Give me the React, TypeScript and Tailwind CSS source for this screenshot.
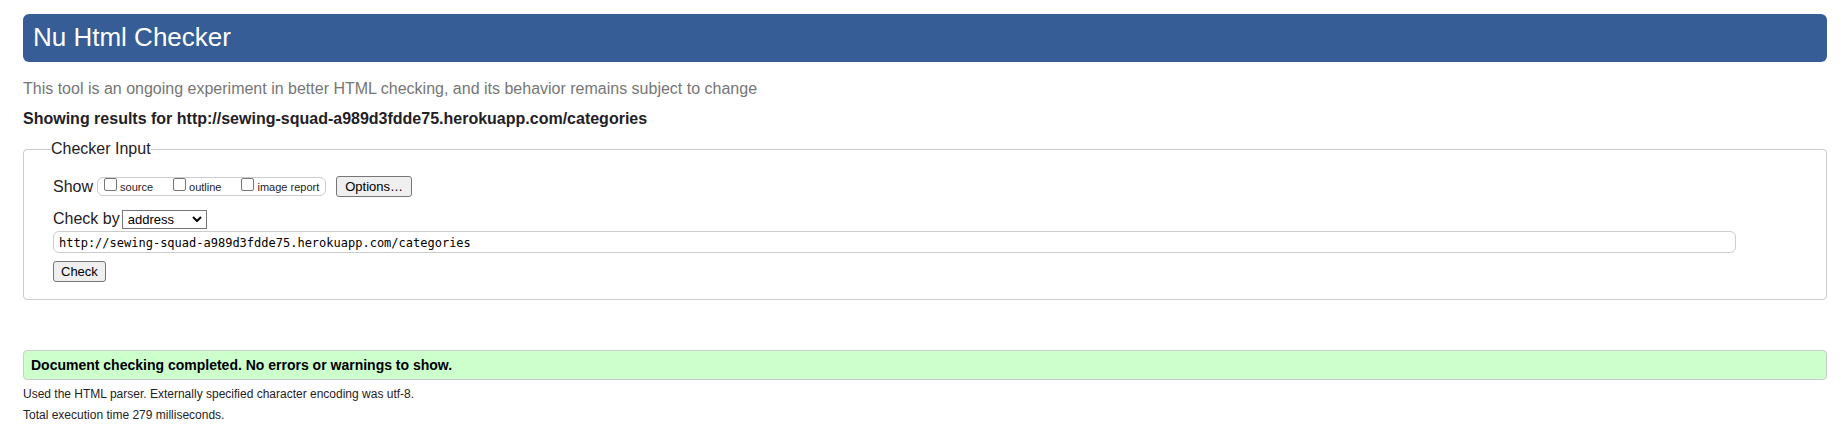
import { useState } from "react";

const reports = ["source", "outline", "image report"];

const buttonClass =
  "h-[21px] rounded-[3px] border border-[#767676] bg-[#efefef] text-[13px] leading-none text-black";

export default function App() {
  const [address, setAddress] = useState(
    "http://sewing-squad-a989d3fdde75.herokuapp.com/categories",
  );

  return (
    <div className="bg-white pt-3.5 pr-3.5 pl-[23px] font-['Liberation_Sans',Arial,sans-serif] text-base leading-5 text-[#1f2126]">
      <header className="rounded-md bg-[#365d95] px-2.5 pt-[5px] pb-[7px]">
        <h1 className="text-[26px] leading-9 text-white">Nu Html Checker</h1>
      </header>

      <main>
        <p className="mt-[17px] text-[#767676]">
          This tool is an ongoing experiment in better HTML checking, and its
          behavior remains subject to change
        </p>
        <h2 className="mt-2.5 font-bold">
          Showing results for{" "}
          http://sewing-squad-a989d3fdde75.herokuapp.com/categories
        </h2>

        <form onSubmit={(event) => event.preventDefault()}>
          <fieldset className="mt-2.5 rounded border border-[#cccccc] px-[29px] pb-[17px]">
            <legend className="-ml-0.5">Checker Input</legend>

            <div className="mt-[17px] flex items-center">
              <span id="show-label">Show</span>
              <div
                role="group"
                aria-labelledby="show-label"
                className="ml-1 flex h-[19px] gap-5 rounded-md border border-[#cccccc] px-1.5"
              >
                {reports.map((report) => (
                  <label
                    key={report}
                    className="flex gap-[3px] text-[11px] leading-[19px]"
                  >
                    <input
                      type="checkbox"
                      className="size-[13px] appearance-none rounded-[2px] border border-[#767676] bg-white checked:bg-[#0075ff]"
                    />
                    {report}
                  </label>
                ))}
              </div>
              <button type="button" className={`ml-2.5 px-2 ${buttonClass}`}>
                Options…
              </button>
            </div>

            <div className="mt-3 flex items-center">
              <label htmlFor="method">Check by</label>
              <div className="ml-0.5 grid items-center">
                <select
                  id="method"
                  className="col-start-1 row-start-1 h-[19px] w-[85px] appearance-none border border-[#767676] bg-white pl-[5px] text-[13px] leading-none text-black"
                >
                  <option>address</option>
                  <option>file upload</option>
                  <option>text input</option>
                </select>
                <svg
                  viewBox="0 0 10 6"
                  aria-hidden="true"
                  className="pointer-events-none col-start-1 row-start-1 mr-[5px] h-1.5 w-2.5 justify-self-end"
                >
                  <path
                    d="M1 1l4 4 4-4"
                    fill="none"
                    stroke="#000"
                    strokeWidth="2"
                  />
                </svg>
              </div>
            </div>

            <input
              type="url"
              aria-label="Address"
              value={address}
              onChange={(event) => setAddress(event.target.value)}
              className="mt-0.5 block h-[22px] w-[96.5%] rounded-md border border-[#cccccc] bg-white px-[5px] pt-0.5 font-['DejaVu_Sans_Mono',monospace] text-xs text-black"
            />
            <button type="submit" className={`mt-2 block px-[7px] ${buttonClass}`}>
              Check
            </button>
          </fieldset>
        </form>

        <section aria-label="Results">
          <p className="mt-[50px] rounded border border-[#cccccc] bg-[#ccffcc] px-[7px] py-[3px] text-sm leading-[22px] font-bold text-black">
            Document checking completed. No errors or warnings to show.
          </p>
          <p className="mt-1 text-xs leading-[21px]">
            Used the HTML parser. Externally specified character encoding was
            utf-8.
          </p>
          <p className="text-xs leading-[21px]">
            Total execution time 279 milliseconds.
          </p>
        </section>
      </main>
    </div>
  );
}
